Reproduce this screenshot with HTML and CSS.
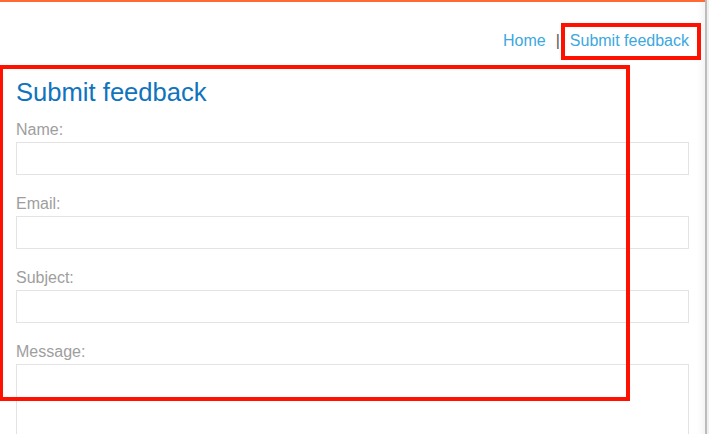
FILE: index.html
```html
<!DOCTYPE html>
<html lang="en">
<head>
<meta charset="utf-8">
<title>Submit feedback</title>
<link rel="stylesheet" href="styles.css">
</head>
<body>
<div class="page">
  <div class="main">
    <nav class="topnav">
      <a href="#" class="nav-link">Home</a>
      <span class="nav-sep">|</span>
      <a href="#" class="nav-link">Submit feedback</a>
    </nav>
    <section class="feedback">
      <h1 class="feedback-title">Submit feedback</h1>
      <form class="feedback-form">
        <label class="field-label" for="f-name">Name:</label>
        <input class="field-input" id="f-name" type="text">
        <label class="field-label" for="f-email">Email:</label>
        <input class="field-input" id="f-email" type="text">
        <label class="field-label" for="f-subject">Subject:</label>
        <input class="field-input" id="f-subject" type="text">
        <label class="field-label" for="f-message">Message:</label>
        <textarea class="field-textarea" id="f-message"></textarea>
      </form>
    </section>
  </div>
  <div class="edge"></div>
  <div class="mark mark-link"></div>
  <div class="mark mark-form"></div>
</div>
</body>
</html>
```
FILE: styles.css
```css
html, body {
  margin: 0;
  padding: 0;
  background: #ffffff;
}

body {
  font-family: "Liberation Sans", Arial, sans-serif;
  font-size: 16px;
}

.page {
  position: relative;
  display: flex;
  height: 100vh;
  overflow: hidden;
}

.main {
  flex: 1;
  border-top: 2px solid #ff6a35;
  padding: 0 16px;
  box-shadow: inset -10px 0 10px -9px rgba(0, 0, 0, 0.08);
}

.edge {
  width: 4px;
  background: linear-gradient(to right, #bcbcbc 0 2px, #efefef 2px);
}

.topnav {
  display: flex;
  justify-content: flex-end;
  align-items: baseline;
  column-gap: 10px;
  padding-top: 29px;
  line-height: 20px;
}

.nav-link {
  color: #3ba8e0;
  text-decoration: none;
}

.nav-sep {
  color: #555555;
}

.feedback {
  padding-top: 26px;
}

.feedback-title {
  margin: 0 0 13px;
  font-size: 25.6px;
  font-weight: normal;
  line-height: 30px;
  color: #0f74bd;
}

.feedback-form {
  display: flex;
  flex-direction: column;
}

.field-label {
  display: block;
  line-height: 20px;
  margin-bottom: 2px;
  color: #9e9e9e;
}

.field-input,
.field-textarea {
  box-sizing: border-box;
  width: 100%;
  margin: 0 0 19px;
  border: 1px solid #e3e3e3;
  background: #ffffff;
  font: inherit;
  padding: 4px 8px;
}

.field-input {
  height: 33px;
}

.field-textarea {
  height: 150px;
  resize: none;
}

.mark {
  position: absolute;
  box-sizing: border-box;
  border: 4px solid #ff1100;
  pointer-events: none;
}

.mark-link {
  left: 561px;
  top: 23px;
  width: 140px;
  height: 37px;
}

.mark-form {
  left: -1px;
  top: 65px;
  width: 631px;
  height: 336px;
}
```
